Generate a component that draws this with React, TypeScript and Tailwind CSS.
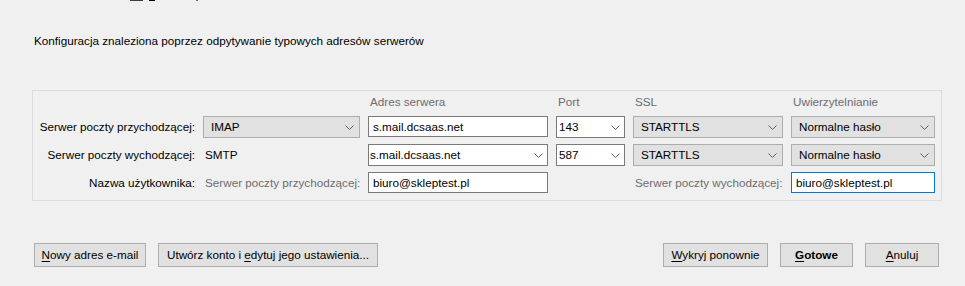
import React from "react";

const FONT = { fontFamily: '"Liberation Sans", Arial, sans-serif' };

function Chevron() {
  return (
    <svg width="9" height="5" viewBox="0 0 9 5" className="shrink-0">
      <polyline points="0.5,0.5 4.5,4.5 8.5,0.5" fill="none" stroke="#606060" strokeWidth="1" />
    </svg>
  );
}

function Select({ value }: { value: string }) {
  return (
    <div className="flex h-[22px] items-center justify-between border border-[#adadad] bg-[#e1e1e1] pl-[7px] pr-[5px] text-black">
      <span>{value}</span>
      <Chevron />
    </div>
  );
}

function Combo({ value, tight }: { value: string; tight?: boolean }) {
  return (
    <div
      className={`flex h-[22px] items-center justify-between border border-[#7a7a7a] bg-white pr-[4px] text-black ${
        tight ? "pl-[1px]" : "pl-[2px]"
      }`}
    >
      <span>{value}</span>
      <Chevron />
    </div>
  );
}

function Input({ value, focused }: { value: string; focused?: boolean }) {
  return (
    <div
      className={`flex h-[21px] items-center border bg-white pl-[4px] text-black ${
        focused ? "border-[#0078d7]" : "border-[#7a7a7a]"
      }`}
    >
      {value}
    </div>
  );
}

function Label({ children }: { children: React.ReactNode }) {
  return <div className="flex items-center justify-end whitespace-nowrap text-black">{children}</div>;
}

function Button({
  children,
  width,
  bold,
}: {
  children: React.ReactNode;
  width: string;
  bold?: boolean;
}) {
  return (
    <div
      className={`flex h-[24px] items-center justify-center border border-[#adadad] bg-[#e1e1e1] text-black ${width} ${
        bold ? "font-bold" : ""
      }`}
    >
      <span className="whitespace-nowrap">{children}</span>
    </div>
  );
}

function U({ children }: { children: React.ReactNode }) {
  return <span className="underline underline-offset-2">{children}</span>;
}

export default function App() {
  return (
    <div className="relative h-[286px] w-[965px] overflow-hidden bg-[#f0f0f0] text-[11.7px] leading-[16px]" style={FONT}>
      {/* bottoms of the heading cut off at the top edge */}
      <div className="absolute left-[130px] top-0 h-[1px] w-[13px] bg-[#3c3c3c]" />
      <div className="absolute left-[149px] top-0 h-[1px] w-[6px] bg-black" />
      <div className="absolute left-[196px] top-0 h-[1px] w-[2px] bg-[#3a6fb0]" />

      <div className="whitespace-nowrap pl-[34px] pt-[33px] text-black">
        Konfiguracja znaleziona poprzez odpytywanie typowych adresów serwerów
      </div>

      <div className="ml-[32px] mt-[41px] w-[910px] border border-[#dcdcdc] pb-[6px]">
        <div className="grid grid-cols-[162px_157px_180px_69px_150px_144px] grid-rows-[19px_22px_22px_22px] gap-x-[8px] gap-y-[6px] whitespace-nowrap">
          <div />
          <div />
          <div className="flex items-end pl-[2px] text-[#6d6d6d]">Adres serwera</div>
          <div className="flex items-end pl-[2px] text-[#6d6d6d]">Port</div>
          <div className="flex items-end pl-[2px] text-[#6d6d6d]">SSL</div>
          <div className="flex items-end pl-[2px] text-[#6d6d6d]">Uwierzytelnianie</div>

          <Label>Serwer poczty przychodzącej:</Label>
          <Select value="IMAP" />
          <Input value="s.mail.dcsaas.net" />
          <Combo value="143" />
          <Select value="STARTTLS" />
          <Select value="Normalne hasło" />

          <Label>Serwer poczty wychodzącej:</Label>
          <div className="flex items-center pl-[2px] text-black">SMTP</div>
          <Combo value="s.mail.dcsaas.net" tight />
          <Combo value="587" />
          <Select value="STARTTLS" />
          <Select value="Normalne hasło" />

          <Label>Nazwa użytkownika:</Label>
          <div className="flex items-center pl-[2px] text-[#6d6d6d]">Serwer poczty przychodzącej:</div>
          <Input value="biuro@skleptest.pl" />
          <div />
          <div className="flex items-center pl-[2px] text-[#6d6d6d]">Serwer poczty wychodzącej:</div>
          <Input value="biuro@skleptest.pl" focused />
        </div>
      </div>

      <div className="mt-[42px] flex items-center pl-[34px] pr-[26px]">
        <Button width="w-[112px]">
          <U>N</U>owy adres e-mail
        </Button>
        <div className="ml-[12px]">
          <Button width="w-[220px]">
            Utwórz konto i <U>e</U>dytuj jego ustawienia...
          </Button>
        </div>
        <div className="ml-auto flex gap-[12px]">
          <Button width="w-[105px]">
            <U>W</U>ykryj ponownie
          </Button>
          <Button width="w-[73px]" bold>
            <U>G</U>otowe
          </Button>
          <Button width="w-[74px]">
            <U>A</U>nuluj
          </Button>
        </div>
      </div>
    </div>
  );
}
